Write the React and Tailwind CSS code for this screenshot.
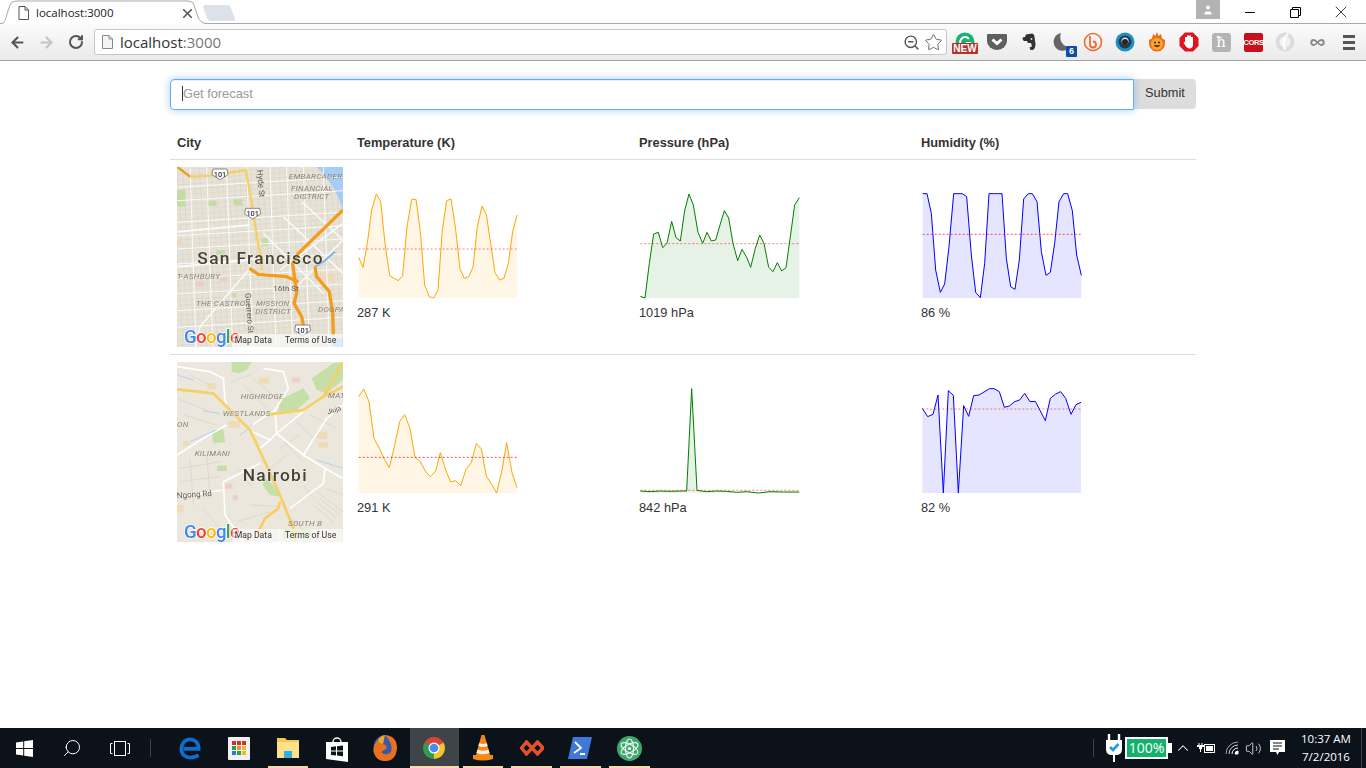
import React from "react";
import { ArrowLeft, ArrowRight, RotateCw, Star, Search, ZoomOut, X, ChevronUp, Infinity as InfinityIcon, Volume2, User } from "lucide-react";

const charts = {
  t1: [[26,232],[39,262],[52,190],[65,90],[79,42],[92,65],[105,190],[119,287],[132,295],[145,302],[158,287],[171,140],[185,58],[198,58],[211,155],[224,315],[238,350],[251,354],[264,330],[277,150],[290,62],[303,57],[316,140],[330,267],[343,295],[356,290],[369,262],[382,140],[396,78],[409,103],[422,190],[435,278],[449,300],[462,295],[475,250],[488,155],[501,105]],
  p1: [[31,349],[45,354],[58,250],[71,162],[85,157],[98,203],[111,190],[125,124],[138,173],[151,183],[164,92],[177,42],[190,75],[204,157],[218,190],[231,157],[244,183],[257,180],[270,135],[283,92],[296,114],[309,190],[323,242],[336,208],[350,232],[362,262],[376,205],[389,165],[402,190],[416,262],[429,275],[442,248],[455,273],[468,263],[481,170],[494,75],[508,53]],
  h1: [[32,41],[45,41],[58,100],[71,270],[85,337],[98,312],[111,200],[125,41],[138,41],[151,41],[164,50],[178,225],[191,337],[205,353],[218,250],[231,41],[244,41],[257,41],[270,41],[283,235],[296,320],[309,328],[322,240],[335,57],[349,41],[361,41],[375,65],[388,215],[402,286],[415,277],[428,190],[441,65],[455,41],[467,41],[481,92],[494,225],[508,286]],
  t2: [[26,50],[41,27],[57,65],[72,175],[88,205],[103,237],[118,263],[133,200],[149,125],[164,104],[180,145],[195,232],[211,245],[226,273],[241,290],[257,273],[271,218],[287,270],[302,306],[317,302],[332,317],[348,268],[364,248],[379,190],[394,207],[409,288],[425,313],[440,339],[456,270],[470,188],[486,278],[501,323]],
  p2: [[31,333],[60,335],[90,333],[120,334],[150,333],[170,333],[185,26],[201,331],[230,335],[260,333],[290,334],[320,337],[350,335],[385,339],[420,335],[460,336],[508,336]],
  h2: [[31,85],[47,110],[63,103],[78,45],[94,339],[109,32],[124,46],[139,339],[155,77],[170,109],[185,47],[201,45],[216,36],[232,26],[246,26],[262,35],[277,82],[292,78],[308,65],[323,60],[338,40],[354,65],[370,64],[385,93],[400,122],[415,55],[431,42],[446,35],[461,55],[477,103],[492,74],[507,67]],
};

function Spark({ pts, color, ox, oy, base, avg, label, avgOpacity = 0.5 }) {
  const line = pts.map((p) => p.join(",")).join(" ");
  const first = pts[0][0];
  const last = pts[pts.length - 1][0];
  return (
    <div className="pt-[20px]">
      <svg width="166" height="115" viewBox={`${ox} ${oy} 498 345`} className="block">
        <polygon points={`${first},${base} ${line} ${last},${base}`} fill={color} fillOpacity="0.1" />
        <polyline points={line} fill="none" stroke={color} strokeWidth="3" strokeLinejoin="round" />
        <line x1={first} x2={last} y1={avg} y2={avg} stroke="red" strokeWidth="3" strokeOpacity={avgOpacity} strokeDasharray="6 6" />
      </svg>
      <div className="pt-px text-[12.8px] leading-5 text-[#333]">{label}</div>
    </div>
  );
}

const labelCls = "font-['Roboto',sans-serif]";

function MapFooter() {
  return (
    <g className={labelCls}>
      <text x="42" y="549" fontSize="56" fontWeight="500" stroke="#fff" strokeWidth="4" paintOrder="stroke" letterSpacing="-2">
        <tspan fill="#4285f4">G</tspan><tspan fill="#ea4335">o</tspan><tspan fill="#fbbc05">o</tspan><tspan fill="#4285f4">g</tspan><tspan fill="#34a853">l</tspan><tspan fill="#ea4335">e</tspan>
      </text>
      <rect x="187" y="522" width="331" height="39" fill="#fff" fillOpacity="0.6" />
      <text x="194" y="548" fontSize="26" fill="#333">Map Data</text>
      <line x1="328" x2="328" y1="526" y2="556" stroke="#fff" strokeWidth="2" />
      <text x="345" y="548" fontSize="26" fill="#333">Terms of Use</text>
    </g>
  );
}

function SfMap() {
  const h = [70, 110, 175, 215, 255, 300, 345, 390, 440, 490];
  const v = [60, 110, 170, 230, 300, 350, 400, 460];
  const tx = "#8d8473";
  return (
    <svg width="166" height="180" viewBox="21 21 498 540" className="block blur-[0.4px]">
      <defs>
        <pattern id="sfg" width="17" height="15" patternUnits="userSpaceOnUse" patternTransform="rotate(-4)">
          <path d="M0 0H17M0 0V15" stroke="#d2cec0" strokeWidth="2" fill="none" />
        </pattern>
      </defs>
      <rect x="21" y="21" width="498" height="540" fill="#e6e2d6" />
      <rect x="21" y="21" width="498" height="540" fill="url(#sfg)" />
      <path d="M440 21H519V150C505 110 490 70 440 21Z" fill="#a8ccf5" />
      <path d="M485 535H519V561H490Z" fill="#a8ccf5" />
      {[[21,90,25,50],[112,122,28,16],[190,118,28,18],[275,235,20,22],[140,270,25,14],[78,365,25,16],[150,345,24,18],[180,400,18,12],[21,235,15,20],[375,480,22,22],[455,340,40,25],[440,160,18,14]].map(([x,y,w,hh],i)=>(
        <rect key={i} x={x} y={y} width={w} height={hh} fill={i>7?"#ecd9bf":i===5||i===6?"#e9cfc8":"#c4dba6"} />
      ))}
      <g stroke="#fff" strokeWidth="3" fill="none" opacity="0.85">
        {h.map((y,i)=><path key={i} d={`M21 ${y+12}L519 ${y-18}`} />)}
        {v.map((x,i)=><path key={i} d={`M${x} 21L${x+18} 561`} />)}
        <path d="M240 325L90 500L75 561M519 190L330 330M519 240L360 400M280 220L460 400M340 170L519 340M395 125L519 240" strokeWidth="4.5" />
        <path d="M21 320L240 300M21 215L240 195" strokeWidth="6" />
      </g>
      <path d="M435 320L460 305L495 275" stroke="#7fb2ee" strokeWidth="6" fill="none" />
      <path d="M60 50L130 46L228 30L245 130L270 285L275 330" stroke="#f6cf65" strokeWidth="7" fill="none" />
      <path d="M21 20L60 50" stroke="#f29b1f" strokeWidth="7" fill="none" />
      <g stroke="#f29d1f" strokeWidth="10" fill="none" strokeLinejoin="round">
        <path d="M519 150L385 280L368 310L380 400L372 430L395 470L400 495" />
        <path d="M238 325L265 343L350 350L385 365" />
        <path d="M435 320L440 350L478 395L488 460L490 525" />
      </g>
      {[[150,42],[248,160],[398,510]].map(([x,y])=>(
        <g key={y}>
          <path d={`M${x-21} ${y-15}H${x+21}L${x+24} ${y+2}L${x} ${y+17}L${x-24} ${y+2}Z`} fill="#fff" stroke="#555" strokeWidth="2" />
          <text x={x} y={y+8} textAnchor="middle" fontSize="22" fontWeight="500" fill="#333" className={labelCls}>101</text>
        </g>
      ))}
      <g className={labelCls} fill={tx} fontStyle="italic" fontSize="24" letterSpacing="1">
        <text x="356" y="58">EMBARCADERO</text>
        <text x="363" y="93">FINANCIAL</text>
        <text x="372" y="118">DISTRICT</text>
        <text x="21" y="357">T-ASHBURY</text>
        <text x="78" y="439">THE CASTRO</text>
        <text x="258" y="439">MISSION</text>
        <text x="256" y="463">DISTRICT</text>
        <text x="444" y="457">DOGPA</text>
      </g>
      <g className={labelCls} fill="#5f5a4e" fontSize="24">
        <text x="310" y="392">16th St</text>
        <text transform="translate(262,30) rotate(86)">Hyde St</text>
        <text transform="translate(226,400) rotate(86)">Guerrero St</text>
      </g>
      <text x="82" y="311" fontSize="52" fontWeight="500" fill="#474236" letterSpacing="4" stroke="#fff" strokeWidth="3" strokeOpacity="0.5" paintOrder="stroke" className={labelCls}>San Francisco</text>
      <MapFooter />
    </svg>
  );
}

function NairobiMap() {
  const tx = "#8d8473";
  return (
    <svg width="166" height="180" viewBox="21 21 498 540" className="block blur-[0.4px]">
      <rect x="21" y="21" width="498" height="540" fill="#ebe7dd" />
      <g fill="#c6dea8">
        <path d="M185 21H245L230 45L205 55L185 50Z" />
        <path d="M425 70L490 25L519 21V75L470 115L440 105Z" />
        <path d="M330 135L400 100L420 130L380 165L325 170Z" />
        <path d="M125 228L160 222L165 262L130 265Z" />
        <path d="M285 370L310 390L330 425L300 420L278 390Z" />
        <rect x="142" y="332" width="28" height="16" />
        <rect x="340" y="522" width="85" height="30" />
      </g>
      <g fill="#ecdcb8">
        <rect x="112" y="85" width="26" height="18" />
        <rect x="265" y="68" width="32" height="18" />
        <rect x="175" y="198" width="35" height="20" />
        <rect x="440" y="230" width="32" height="22" />
        <rect x="445" y="262" width="28" height="16" />
        <rect x="38" y="258" width="20" height="14" />
        <rect x="21" y="450" width="20" height="22" />
      </g>
      <g fill="#ecd0cb">
        <rect x="365" y="68" width="26" height="14" />
        <rect x="165" y="385" width="22" height="16" />
        <rect x="188" y="420" width="15" height="16" />
      </g>
      <g stroke="#d6d2c6" strokeWidth="2" fill="none">
        <path d="M30 340L150 320M30 380L150 365M60 310L70 450M110 300L120 420M220 90L290 160M250 70L330 140M340 260L400 320M330 280L390 240M440 410L519 470M450 430L510 480M440 440L500 490M430 450L490 500M350 300L290 350M40 180L140 210M400 390L430 430M240 450L330 455M200 500L300 470M21 130L120 170M60 60L120 90M180 80L240 60M380 200L440 260M420 180L500 220M350 480L420 540M200 340L250 400M100 460L150 520M470 400L519 420" />
      </g>
      <g stroke="#fff" strokeWidth="5" fill="none" strokeLinejoin="round">
        <path d="M21 35L120 50L160 70L165 135L170 150" />
        <path d="M280 40L340 50L355 100L315 165L260 200L235 225" />
        <path d="M315 165L320 235L400 300L465 340L519 370" />
        <path d="M21 300L100 250L170 210" />
        <path d="M400 300L470 190L519 150" />
        <path d="M160 380L270 325M160 380L165 480L220 561" />
        <path d="M21 425L160 405" />
        <path d="M465 340L460 385L360 460" />
        <path d="M235 225L300 255L320 235L400 170M300 255L270 280" />
      </g>
      <g stroke="#a7cdf3" strokeWidth="2.5" fill="none">
        <path d="M21 60L70 75M100 168L150 175M60 260L140 225M210 240L250 210M440 315L519 340" />
      </g>
      <g stroke="#f6cf65" strokeWidth="8" fill="none" strokeLinejoin="round">
        <path d="M21 103L130 115L165 150L240 225L280 310L330 420L370 520L375 561" />
        <path d="M300 178L400 165L460 125L519 21" />
        <path d="M460 125L519 95" />
        <path d="M330 440L325 460L285 490L260 540" />
      </g>
      <g className={labelCls} fill={tx} fontStyle="italic" fontSize="24" letterSpacing="1">
        <text x="212" y="133">HIGHRIDGE</text>
        <text x="158" y="183" stroke="#ebe7dd" strokeWidth="3" paintOrder="stroke">WESTLANDS</text>
        <text x="74" y="303">KILIMANI</text>
        <text x="354" y="512">SOUTH B</text>
        <text x="474" y="128">MAT</text>
        <text x="21" y="216">ON</text>
      </g>
      <g className={labelCls} fill="#5f5a4e" fontSize="24">
        <text x="21" y="430" transform="rotate(-4 21 430)">Ngong Rd</text>
        <text x="474" y="178" fontSize="20" transform="rotate(-18 474 178)">Jiuja</text>
      </g>
      <text x="218" y="377" fontSize="52" fontWeight="500" fill="#474236" letterSpacing="4" stroke="#fff" strokeWidth="3" strokeOpacity="0.5" paintOrder="stroke" className={labelCls}>Nairobi</text>
      <MapFooter />
    </svg>
  );
}

const Ext = ({ children }) => <div className="relative w-[32px] h-full flex items-center justify-center shrink-0">{children}</div>;

function Extensions() {
  return (
    <div className="flex h-full ml-[2px]">
      <Ext>
        <svg width="20" height="20" viewBox="0 0 20 20"><circle cx="10" cy="10" r="9.5" fill="#16b374" /><path d="M14 7A5 5 0 1 0 15 11H11" fill="none" stroke="#fff" strokeWidth="2" /></svg>
        <span className="absolute left-[3px] top-[19px] h-[11px] w-[26px] bg-[#b5312c] rounded-[1px] text-white text-[10px] leading-[11px] font-bold text-center font-['Liberation_Sans',sans-serif]">NEW</span>
      </Ext>
      <Ext><svg width="20" height="18" viewBox="0 0 20 18"><path d="M1 1H19Q20 1 20 2V8A10 9 0 0 1 0 8V2Q0 1 1 1Z" fill="#5f5f5f" /><path d="M5.5 6.5L10 10.5L14.5 6.5" fill="none" stroke="#fff" strokeWidth="3" /></svg></Ext>
      <Ext><svg width="14" height="18" viewBox="0 0 14 18"><path d="M4 1.5L10 .5Q12.5 1 12.5 4L13.5 11Q13.5 16 10.5 17H8.5L7.5 14.5L10 13.5L9 10H6L5 8H2Q.5 7 .5 4.5L3 4Z" fill="#333" /><circle cx="9.5" cy="6" r=".9" fill="#eee" /></svg></Ext>
      <Ext>
        <svg width="18" height="20" viewBox="0 0 18 20"><path d="M9 1A9 9 0 1 0 18 15A9 10 0 0 1 9 1Z" fill="#666" /></svg>
        <span className="absolute right-[0px] top-[22px] w-[11px] h-[11px] bg-[#0b4ea2] rounded-[1px] text-white text-[9px] leading-[11px] font-bold text-center font-['Liberation_Sans',sans-serif]">6</span>
      </Ext>
      <Ext><svg width="20" height="20" viewBox="0 0 20 20"><circle cx="10" cy="10" r="8.5" fill="none" stroke="#ef6c2f" strokeWidth="1.6" /><path d="M7 4V12.5A3 3 0 1 0 10 9.5" fill="none" stroke="#ef6c2f" strokeWidth="1.8" /></svg></Ext>
      <Ext><svg width="20" height="20" viewBox="0 0 20 20"><circle cx="10" cy="10" r="9.5" fill="#1f8fc4" /><circle cx="10" cy="10" r="6.5" fill="#1d3c50" /><circle cx="10" cy="9" r="3.5" fill="#e5e9ec" /><circle cx="10" cy="10" r="3" fill="#222" /></svg></Ext>
      <Ext><svg width="18" height="20" viewBox="0 0 18 20"><path d="M9 0L10.5 4L13 2L14 6.5L17 8Q18 19 9 19.5Q0 19 1 8L4 6.5L5 2L7.5 4Z" fill="#ef6a1c" /><circle cx="9" cy="12" r="6" fill="#f9a825" /><circle cx="7" cy="10.5" r="1" fill="#222" /><circle cx="11" cy="10.5" r="1" fill="#222" /><path d="M5.5 13Q9 17.5 12.5 13Z" fill="#7a2a10" /></svg></Ext>
      <Ext><svg width="20" height="20" viewBox="0 0 20 20"><path d="M6 0.5H14L19.5 6V14L14 19.5H6L0.5 14V6Z" fill="#e0141c" /><path d="M6 5H8V10V3.5H10V10V3.5H12V10V5H14V12.5Q14 16.5 10.5 16.5Q8 16.5 6 13L4.5 10.5L6 10Z" fill="#fff" /></svg></Ext>
      <Ext>
        <span className="w-[19px] h-[19px] rounded-[3px] bg-[#b4b4b4] text-white text-[15px] leading-[19px] text-center font-['DejaVu_Serif',serif]">ħ</span>
      </Ext>
      <Ext>
        <span className="w-[19px] h-[19px] rounded-[2px] bg-[#c8101a] text-white text-[7.5px] leading-[19px] font-bold text-center font-['Liberation_Sans',sans-serif] tracking-[-0.4px]">CORS</span>
      </Ext>
      <Ext><svg width="20" height="20" viewBox="0 0 20 20"><circle cx="10" cy="10" r="7.5" fill="none" stroke="#dcdcdc" strokeWidth="4" /><path d="M13 2Q6 8 10 18" fill="none" stroke="#fff" strokeWidth="2" /></svg></Ext>
      <Ext><InfinityIcon size={15} strokeWidth={3} className="text-[#8a8a8a]" /></Ext>
      <Ext>
        <div className="flex flex-col gap-[3px]">
          <span className="w-[12px] h-[3px] bg-[#555]" />
          <span className="w-[12px] h-[3px] bg-[#555]" />
          <span className="w-[12px] h-[3px] bg-[#555]" />
        </div>
      </Ext>
    </div>
  );
}

function Chrome() {
  return (
    <div className="shrink-0 font-['Open_Sans',sans-serif]">
      <div className="relative h-[24px] bg-white flex items-start">
        <div className="absolute left-0 right-0 bottom-0 h-px bg-[#a9a9a9]" />
        <div className="relative w-[206px] h-[24px] shrink-0">
          <svg width="206" height="24" viewBox="0 0 206 24" className="absolute inset-0">
            <path d="M0 24C5 24 5 21 7 14L10 5Q11 1 16 1H188Q193 1 194 5L198 17Q200 23 206 23.5V24Z" fill="#fff" />
            <path d="M0 23.5C5 23.5 5 21 7 14L10 5Q11 1 16 1H188Q193 1 194 5L198 17Q200 23 206 23.5" fill="none" stroke="#a9a9a9" />
          </svg>
          <svg width="11" height="14" viewBox="0 0 11 14" className="absolute left-[18px] top-[6px]"><path d="M1 .5H7L10.5 4V13.5H1ZM7 .5V4H10.5" fill="#fff" stroke="#555" /></svg>
          <span className="absolute left-[36px] top-[4px] text-[11.5px] leading-[17px] text-[#222]">localhost:3000</span>
          <X size={15} strokeWidth={2.6} className="absolute left-[180px] top-[6px] text-[#555]" />
        </div>
        <svg width="34" height="18" viewBox="0 0 34 18" className="relative shrink-0 -ml-[3px] mt-[5px]"><path d="M2 0H24Q27 0 28 3L32 14Q32.5 16 30 16H8Q5 16 4 13L0 2Q0 0 2 0Z" fill="#dde2ea" /></svg>
        <div className="flex-1" />
        <div className="relative h-[19px] w-[24px] bg-[#b3b3b3] flex items-center justify-center mr-[6px]">
          <User size={12} fill="#fff" strokeWidth={0} className="text-white" />
        </div>
        <div className="relative flex h-[24px] w-[140px] text-black">
          <div className="w-[48px] flex items-center justify-center"><span className="block w-[10px] h-px bg-black" /></div>
          <div className="w-[42px] flex items-center justify-center">
            <svg width="11" height="11" viewBox="0 0 11 11"><path d="M.5 2.5H8.5V10.5H.5ZM2.5 2.5V.5H10.5V8.5H8.5" fill="none" stroke="#000" /></svg>
          </div>
          <div className="w-[50px] flex items-center justify-center"><X size={20} strokeWidth={0.9} /></div>
        </div>
      </div>
      <div className="h-[37px] bg-linear-to-b from-[#fbfbfb] to-[#eaeaea] border-b border-[#a3a3a3] flex items-center">
        <div className="flex items-center w-[94px] pl-[3px]">
          <div className="w-[29px] flex justify-center"><ArrowLeft size={17} strokeWidth={3} className="text-[#555]" /></div>
          <div className="w-[29px] flex justify-center"><ArrowRight size={17} strokeWidth={3} className="text-[#c4c4c4]" /></div>
          <div className="w-[29px] flex justify-center"><RotateCw size={16} strokeWidth={3} className="text-[#555]" /></div>
        </div>
        <div className="w-[853px] h-[26px] bg-white border border-[#c6c6c6] rounded-[3px] flex items-center pl-[7px] pr-[3px]">
          <svg width="11" height="14" viewBox="0 0 11 14" className="shrink-0"><path d="M.5 .5H7L10.5 4V13.5H.5ZM7 .5V4H10.5" fill="#f4f4f4" stroke="#888" /></svg>
          <span className="ml-[7px] text-[15px] leading-[24px] text-[#333]">localhost<span className="text-[#777]">:3000</span></span>
          <div className="flex-1" />
          <ZoomOut size={17} strokeWidth={2} className="text-[#555] mr-[4px]" />
          <Star size={19} strokeWidth={1.2} className="text-[#666]" />
        </div>
        <Extensions />
      </div>
    </div>
  );
}

const TaskBtn = ({ children, active, under, w = "w-[48.75px]" }) => (
  <div className={`relative ${w} h-full flex items-center justify-center shrink-0 ${active ? "bg-[#3e4448]" : ""}`}>
    {children}
    {under === "full" && <span className="absolute left-0 right-0 bottom-0 h-[2px] bg-[#fbd9ae]" />}
    {under === "short" && <span className="absolute left-[4px] right-[4px] bottom-0 h-[2px] bg-[#fbd9ae]" />}
  </div>
);

function Taskbar() {
  return (
    <div className="shrink-0 h-[40px] bg-[#0b1219] flex items-center text-white relative">
      <div className="w-[48px] h-full flex items-center justify-center"><svg width="17" height="17" viewBox="0 0 17 17" fill="#fff"><path d="M0 2.5L7.2 1.4V8H0ZM8.2 1.3L17 0V8H8.2ZM0 9H7.2V15.6L0 14.5ZM8.2 9H17V17L8.2 15.7Z" /></svg></div>
      <div className="w-[48px] h-full flex items-center justify-center"><Search size={20} strokeWidth={1.2} className="-scale-x-100" /></div>
      <div className="w-[48px] h-full flex items-center justify-center"><svg width="20" height="15" viewBox="0 0 20 15" fill="none" stroke="#fff"><rect x="4.5" y=".5" width="11" height="14" /><path d="M2.5 2.5H.5V12.5H2.5M17.5 2.5H19.5V12.5H17.5" /></svg></div>
      <div className="w-[22px] h-full flex items-center"><span className="ml-[6px] block w-px h-[18px] bg-[#3c4247]" /></div>
      <TaskBtn><svg width="22" height="24" viewBox="0 0 23 24"><path d="M5 13H20.5C20.5 6 16 3 11.5 3C6 3 2.5 8 2.5 13C2.5 19 7 22 12 22C15 22 18 21 20.5 19.5" fill="none" stroke="#0a6fd0" strokeWidth="4" /></svg></TaskBtn>
      <TaskBtn>
        <div className="w-[22px] h-[23px] bg-[#f1f1f1] rounded-[1px] grid grid-cols-3 gap-[1px] p-[4px] content-center">
          {["#d9302c","#d9302c","#d9302c","#2e9e4f","#e89a1a","#f0b92c","#1f7fd1","#2e9e4f","#f0b92c"].map((c,i)=><span key={i} className="h-[4px]" style={{backgroundColor:c}} />)}
        </div>
      </TaskBtn>
      <TaskBtn under="short"><svg width="22" height="22" viewBox="0 0 22 22"><path d="M0 1H8L10 3H22V21H0Z" fill="#f5c94b" /><path d="M0 5H22V21H0Z" fill="#fde08a" /><path d="M7 21V14H15V21Z" fill="#2db2e8" /></svg></TaskBtn>
      <TaskBtn><svg width="22" height="27" viewBox="0 0 22 27"><path d="M7 7A4 4 0 0 1 15 7" fill="none" stroke="#fff" strokeWidth="1.4" /><path d="M0 7H22V27L0 24Z" fill="#fff" /><path d="M5 12L10 11.3V15.5H5ZM11 11.2L17 10.4V15.5H11ZM5 16.5H10V20.5L5 20ZM11 16.5H17V21.3L11 20.6Z" fill="#0b1219" /></svg></TaskBtn>
      <TaskBtn><svg width="24" height="26" viewBox="0 0 24 26"><ellipse cx="12" cy="13" rx="11.5" ry="13" fill="#3a5aa8" /><path d="M12 0Q24 1 24 13Q23 26 12 26Q3 26 .5 17Q0 9 5 5Q6 9 10 9Q15 10 13 14Q8 16 9 18Q14 21 18 17Q21 10 12 0Z" fill="#e8701f" /><path d="M5 5Q6 9 10 9L12 0Q7 1 5 5Z" fill="#f5a623" /></svg></TaskBtn>
      <TaskBtn active under="full"><svg width="24" height="24" viewBox="0 0 24 24"><path d="M2.5 6.5A11 11 0 0 1 21.5 6.5L12 12Z" fill="#dc4437" /><path d="M21.5 6.5A11 11 0 0 1 12 23L12 12Z" fill="#f5c42c" /><path d="M12 23A11 11 0 0 1 2.5 6.5L12 12Z" fill="#2f9e4f" /><circle cx="12" cy="12" r="5.5" fill="#fff" /><circle cx="12" cy="12" r="4.3" fill="#4a8af0" /></svg></TaskBtn>
      <TaskBtn under="short"><svg width="20" height="26" viewBox="0 0 20 26"><path d="M8.5 0H11.5L14 9L17 20H20V24Q10 27 0 24V20H3L6 9Z" fill="#f58a13" /><path d="M6.2 8Q10 10 13.8 8L14.6 11Q10 13 5.4 11ZM4.5 14.5Q10 17 15.5 14.5L16.5 18Q10 20.5 3.5 18Z" fill="#f3efe6" /></svg></TaskBtn>
      <TaskBtn under="short"><svg width="24" height="16" viewBox="0 0 24 16" fill="none" stroke="#e5512c" strokeWidth="3.4"><path d="M6.5 2L12 8L6.5 14L1.5 8ZM17.5 2L23 8L17.5 14L12 8Z" /></svg></TaskBtn>
      <TaskBtn under="short"><svg width="24" height="24" viewBox="0 0 24 24"><path d="M5 1H24L19 23H0Z" fill="#3f78d8" /><path d="M7 6L13 12L6 17M12 18H17" fill="none" stroke="#fff" strokeWidth="1.8" /></svg></TaskBtn>
      <TaskBtn under="short"><svg width="25" height="25" viewBox="0 0 25 25"><circle cx="12.5" cy="12.5" r="12.5" fill="#3da86e" /><g fill="none" stroke="#e6f5ec" strokeWidth="1.2"><ellipse cx="12.5" cy="12.5" rx="4" ry="9.5" /><ellipse cx="12.5" cy="12.5" rx="4" ry="9.5" transform="rotate(60 12.5 12.5)" /><ellipse cx="12.5" cy="12.5" rx="4" ry="9.5" transform="rotate(-60 12.5 12.5)" /></g><circle cx="12.5" cy="12.5" r="1.6" fill="#fff" /></svg></TaskBtn>
      <div className="flex-1" />
      <span className="block w-px h-[18px] bg-[#3c4247] mr-[11px]" />
      <svg width="18" height="28" viewBox="0 0 18 28" className="mr-[1px]"><path d="M4 0V6M14 0V6" stroke="#fff" strokeWidth="2.4" /><path d="M1 6H17V15Q17 21 11 21H10V28H8V21H7Q1 21 1 15Z" fill="#fff" /><path d="M5 13L8 16L13.5 10" fill="none" stroke="#1fa0dc" strokeWidth="2.6" /></svg>
      <div className="w-[43px] h-[22px] border-2 border-white flex items-center justify-center bg-[#13b26b] text-[14px] leading-none font-['Open_Sans',sans-serif] ml-[1px]">100%</div>
      <span className="w-[4px] h-[10px] bg-white mr-[2px]" />
      <ChevronUp size={18} strokeWidth={1.4} className="mr-[5px]" />
      <svg width="18" height="12" viewBox="0 0 18 12" className="mr-[10px]" fill="#fff"><path d="M2 1V3M5 1V3" stroke="#fff" /><path d="M0 3H7V5H5V7H2V5H0ZM3 7H4V10H3Z" /><rect x="7" y="2" width="11" height="9" /><rect x="8" y="3" width="9" height="7" fill="#0b1219" /><rect x="9" y="4" width="7" height="5" /></svg>
      <svg width="17" height="14" viewBox="0 0 17 14" fill="none" stroke="#fff" className="mr-[3px]"><path d="M1 13A12 12 0 0 1 13 1" strokeOpacity=".6" /><path d="M4 13A9 9 0 0 1 13 4" strokeOpacity=".8" /><path d="M7 13A6 6 0 0 1 13 7" /><path d="M10 13A3 3 0 0 1 13 10L13 13Z" fill="#fff" /></svg>
      <Volume2 size={17} strokeWidth={1.1} className="mr-[8px]" />
      <svg width="15" height="16" viewBox="0 0 15 16" className="mr-[15px]"><path d="M0 0H15V12H9L7.5 15L6 12H0Z" fill="#fff" /><path d="M3 3H12M3 6H12M3 9H9" stroke="#0b1219" /></svg>
      <div className="w-[52px] text-center text-[11.5px] leading-[18px] font-['Open_Sans',sans-serif] whitespace-nowrap mr-[9px]">
        <div>10:37 AM</div>
        <div>7/2/2016</div>
      </div>
      <span className="w-px h-full bg-[#3c4247] mr-[4px]" />
    </div>
  );
}

export default function App() {
  return (
    <div className="w-[1366px] h-[768px] overflow-hidden bg-white flex flex-col font-['Liberation_Sans',Arial,sans-serif] text-[#333]">
      <Chrome />
      <main className="flex-1 min-h-0">
        <div className="w-[1026px] mx-auto pt-[18px]">
          <form className="flex items-start">
            <div className="relative flex-1 h-[31px] pb-[2px] border border-[#66afe9] rounded-l-[4px] shadow-[inset_0_1px_1px_rgba(0,0,0,.075),0_0_8px_rgba(102,175,233,.6)] flex items-center pl-[11px] text-[12.8px] text-[#999]">
              <span className="w-px h-[15px] bg-[#333]" />Get forecast
            </div>
            <div className="w-[62px] h-[30px] pb-[2px] bg-[#ddd] rounded-r-[4px] flex items-center justify-center text-[12.8px]">Submit</div>
          </form>
          <div className="mt-[23px] grid grid-cols-[180px_282px_282px_282px] text-[12.8px] leading-5 font-bold border-b border-[#ddd] pb-[6px]">
            <div className="px-[7px]">City</div>
            <div className="px-[7px]">Temperature (K)</div>
            <div className="px-[7px]">Pressure (hPa)</div>
            <div className="px-[7px]">Humidity (%)</div>
          </div>
          <div className="grid grid-cols-[180px_282px_282px_282px] py-[7px] border-b border-[#ddd]">
            <div className="px-[7px]"><SfMap /></div>
            <div className="px-[7px]"><Spark pts={charts.t1} color="orange" ox={21} oy={21} base={354} avg={207} label="287 K" /></div>
            <div className="px-[7px]"><Spark pts={charts.p1} color="green" ox={27} oy={21} base={354} avg={191} label="1019 hPa" /></div>
            <div className="px-[7px]"><Spark pts={charts.h1} color="blue" ox={27} oy={21} base={354} avg={163} label="86 %" avgOpacity={0.7} /></div>
          </div>
          <div className="grid grid-cols-[180px_282px_282px_282px] py-[7px]">
            <div className="px-[7px]"><NairobiMap /></div>
            <div className="px-[7px]"><Spark pts={charts.t2} color="orange" ox={21} oy={6} base={339} avg={232} label="291 K" avgOpacity={0.7} /></div>
            <div className="px-[7px]"><Spark pts={charts.p2} color="green" ox={27} oy={6} base={339} avg={331} label="842 hPa" /></div>
            <div className="px-[7px]"><Spark pts={charts.h2} color="blue" ox={27} oy={6} base={339} avg={87} label="82 %" /></div>
          </div>
        </div>
      </main>
      <Taskbar />
    </div>
  );
}
